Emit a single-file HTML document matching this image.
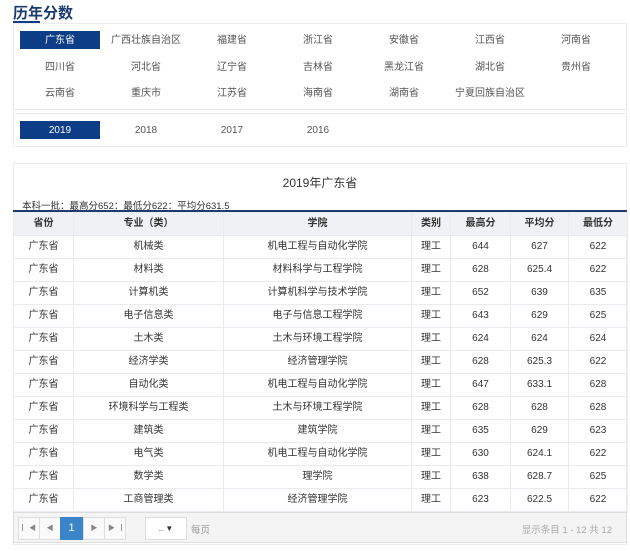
<!DOCTYPE html>
<html><head><meta charset="utf-8"><style>
*{margin:0;padding:0;box-sizing:border-box}
body{width:630px;height:551px;background:#fff;font-family:"Liberation Sans","Noto Sans CJK SC",sans-serif;font-size:10px;color:#333;position:relative;overflow:hidden}
.t{position:absolute;left:13px;top:2px;font-size:15px;font-weight:bold;color:#1c3b6e}
.tl{position:absolute;left:13px;top:21px;width:27px;height:2px;background:#0e3d87}
.box{position:absolute;left:13px;width:614px;border:1px solid #ebebeb;background:#fff}
.it{position:absolute;width:80px;height:18px;line-height:20px;text-align:center;color:#555;font-size:10px}
.it.a{background:#0d3d86;color:#fff}
table{position:absolute;left:13px;top:212px;width:614px;border-collapse:collapse;font-size:10px;table-layout:fixed}
td,th{border:1px solid #e8ecf2;height:23px;text-align:center;font-weight:normal;color:#333;vertical-align:middle;line-height:12px;padding:0}
th{background:#f0f1f4;font-weight:bold}
.pg{position:absolute;left:13px;top:512px;width:614px;height:31px;background:#f4f4f4;border:1px solid #ddd}
.pb{position:absolute;top:4px;height:23px;width:22px;background:#fafafa;border:1px solid #ddd;font-size:7px;line-height:21px;text-align:center;color:#888}
</style></head><body>
<div class="t">历年分数</div><div class="tl"></div>
<div class="box" style="top:23px;height:87px"></div>
<div class="box" style="top:113px;height:34px"></div>
<div class="it a" style="left:20px;top:31px">广东省</div>
<div class="it" style="left:106px;top:31px">广西壮族自治区</div>
<div class="it" style="left:192px;top:31px">福建省</div>
<div class="it" style="left:278px;top:31px">浙江省</div>
<div class="it" style="left:364px;top:31px">安徽省</div>
<div class="it" style="left:450px;top:31px">江西省</div>
<div class="it" style="left:536px;top:31px">河南省</div>
<div class="it" style="left:20px;top:58px">四川省</div>
<div class="it" style="left:106px;top:58px">河北省</div>
<div class="it" style="left:192px;top:58px">辽宁省</div>
<div class="it" style="left:278px;top:58px">吉林省</div>
<div class="it" style="left:364px;top:58px">黑龙江省</div>
<div class="it" style="left:450px;top:58px">湖北省</div>
<div class="it" style="left:536px;top:58px">贵州省</div>
<div class="it" style="left:20px;top:84px">云南省</div>
<div class="it" style="left:106px;top:84px">重庆市</div>
<div class="it" style="left:192px;top:84px">江苏省</div>
<div class="it" style="left:278px;top:84px">海南省</div>
<div class="it" style="left:364px;top:84px">湖南省</div>
<div class="it" style="left:450px;top:84px">宁夏回族自治区</div>
<div class="it a" style="left:20px;top:121px">2019</div>
<div class="it" style="left:106px;top:121px">2018</div>
<div class="it" style="left:192px;top:121px">2017</div>
<div class="it" style="left:278px;top:121px">2016</div>
<div class="box" style="top:163px;height:382px"></div>
<div style="position:absolute;left:13px;width:614px;top:174px;text-align:center;font-size:12px;color:#333">2019年广东省</div>
<div style="position:absolute;left:22px;top:198px;font-size:9.5px;color:#333">本科一批：最高分652：最低分622：平均分631.5</div>
<div style="position:absolute;left:13px;top:210px;width:614px;height:2px;background:#1c3b6e"></div>
<table>
<colgroup><col style="width:60px"><col style="width:150px"><col style="width:188px"><col style="width:39px"><col style="width:60px"><col style="width:58px"><col style="width:59px"></colgroup>
<tr><th>省份</th><th>专业（类）</th><th>学院</th><th>类别</th><th>最高分</th><th>平均分</th><th>最低分</th></tr>
<tr><td>广东省</td><td>机械类</td><td>机电工程与自动化学院</td><td>理工</td><td>644</td><td>627</td><td>622</td></tr>
<tr><td>广东省</td><td>材料类</td><td>材料科学与工程学院</td><td>理工</td><td>628</td><td>625.4</td><td>622</td></tr>
<tr><td>广东省</td><td>计算机类</td><td>计算机科学与技术学院</td><td>理工</td><td>652</td><td>639</td><td>635</td></tr>
<tr><td>广东省</td><td>电子信息类</td><td>电子与信息工程学院</td><td>理工</td><td>643</td><td>629</td><td>625</td></tr>
<tr><td>广东省</td><td>土木类</td><td>土木与环境工程学院</td><td>理工</td><td>624</td><td>624</td><td>624</td></tr>
<tr><td>广东省</td><td>经济学类</td><td>经济管理学院</td><td>理工</td><td>628</td><td>625.3</td><td>622</td></tr>
<tr><td>广东省</td><td>自动化类</td><td>机电工程与自动化学院</td><td>理工</td><td>647</td><td>633.1</td><td>628</td></tr>
<tr><td>广东省</td><td>环境科学与工程类</td><td>土木与环境工程学院</td><td>理工</td><td>628</td><td>628</td><td>628</td></tr>
<tr><td>广东省</td><td>建筑类</td><td>建筑学院</td><td>理工</td><td>635</td><td>629</td><td>623</td></tr>
<tr><td>广东省</td><td>电气类</td><td>机电工程与自动化学院</td><td>理工</td><td>630</td><td>624.1</td><td>622</td></tr>
<tr><td>广东省</td><td>数学类</td><td>理学院</td><td>理工</td><td>638</td><td>628.7</td><td>625</td></tr>
<tr><td>广东省</td><td>工商管理类</td><td>经济管理学院</td><td>理工</td><td>623</td><td>622.5</td><td>622</td></tr>
</table>
<div class="pg">
<div class="pb" style="left:4px">▏◀</div>
<div class="pb" style="left:25px">◀</div>
<div class="pb" style="left:46px;background:#3a85c8;color:#fff;border-color:#3a85c8;font-size:11px;width:23px">1</div>
<div class="pb" style="left:69px">▶</div>
<div class="pb" style="left:90px">▶▕</div>
<div class="pb" style="left:131px;width:42px;background:#fff;font-size:8px;color:#333">.. ▼</div>
<div style="position:absolute;left:177px;top:9px;color:#999;font-size:9.5px">每页</div>
<div style="position:absolute;right:14px;top:9px;color:#aaa;font-size:9.5px">显示条目 1 - 12 共 12</div>
</div>
</body></html>
